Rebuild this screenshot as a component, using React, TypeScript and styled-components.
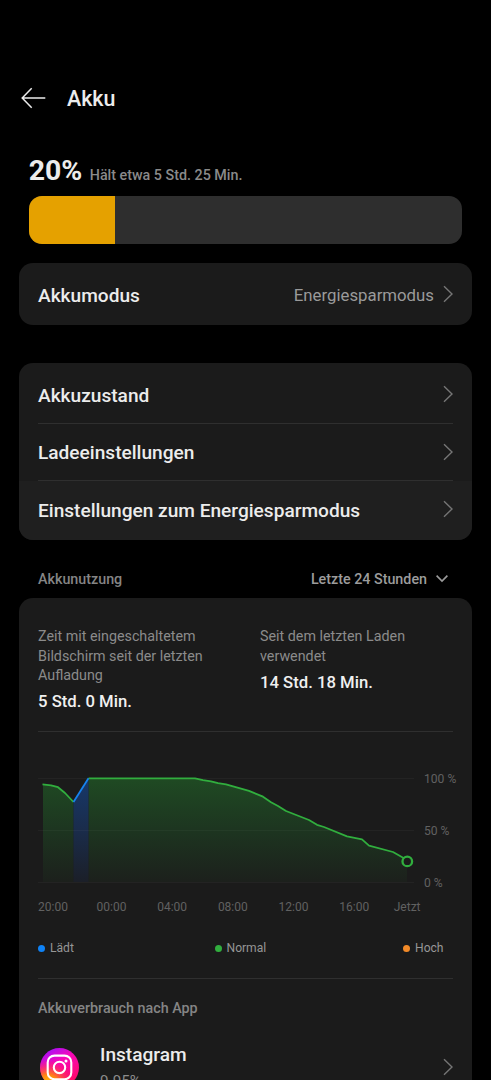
import React from "react";
import styled, { createGlobalStyle } from "styled-components";

const GlobalStyle = createGlobalStyle`
  * { box-sizing: border-box; }
  html, body { margin: 0; padding: 0; background: #000; }
  body { font-family: Roboto, "Liberation Sans", sans-serif; overflow: hidden; }
`;

const Screen = styled.main`
  width: 491px;
  height: 1080px;
  overflow: hidden;
  background: #000;
  display: flex;
  flex-direction: column;
  padding: 78px 19px 0;
`;

const Header = styled.header`
  flex: none;
  display: flex;
  align-items: center;
  height: 40px;
  gap: 21px;
  padding-left: 2px;
`;

const Title = styled.h1`
  margin: 0;
  padding-top: 2px;
  font-size: 21.4px;
  font-weight: 500;
  line-height: 38px;
  color: #ececec;
`;

const Level = styled.section`
  flex: none;
  margin-top: 28px;
  padding: 0 9.7px;
`;

const LevelText = styled.div`
  display: flex;
  align-items: baseline;
  gap: 7.5px;
  height: 50px;
  padding-top: 1px;
  line-height: 48px;
  white-space: nowrap;
`;

const Percent = styled.span`
  font-size: 28.4px;
  font-weight: 700;
  color: #ececec;
`;

const Remaining = styled.span`
  font-size: 14.3px;
  font-weight: 500;
  color: #8a8a8a;
`;

const Track = styled.div`
  height: 48px;
  border-radius: 13px;
  background: #2e2e2e;
  overflow: hidden;
`;

const Fill = styled.div`
  width: 20%;
  height: 100%;
  background: #e5a100;
`;

const Card = styled.section<{ $gap: number }>`
  flex: none;
  margin-top: ${(p) => p.$gap}px;
  border-radius: 14px;
  background: #1b1b1b;
  overflow: hidden;
`;

const Row = styled.div<{ $height: number; $top?: number; $bottom?: number; $active?: boolean }>`
  display: flex;
  align-items: center;
  height: ${(p) => p.$height}px;
  padding: ${(p) => p.$top ?? 0}px 19px ${(p) => p.$bottom ?? 0}px;
  background: ${(p) => (p.$active ? "#1f1f1f" : "transparent")};
`;

const RowLabel = styled.span<{ $drop?: number }>`
  flex: 1;
  padding-top: ${(p) => p.$drop ?? 4}px;
  font-size: 19.1px;
  font-weight: 500;
  line-height: 28px;
  color: #ececec;
  white-space: nowrap;
`;

const RowValue = styled.span`
  margin-right: 9px;
  padding-top: 2px;
  font-size: 16.8px;
  line-height: 28px;
  color: #9a9a9a;
`;

const Divider = styled.hr`
  border: 0;
  height: 1px;
  margin: 0 19px;
  background: #2f2f2f;
`;

const SectionHead = styled.div`
  flex: none;
  display: flex;
  justify-content: space-between;
  align-items: center;
  height: 58px;
  padding: 20px 24px 0 19px;
`;

const Caption = styled.span`
  font-size: 14.3px;
  font-weight: 500;
  line-height: 20px;
  color: #858585;
`;

const Period = styled.span`
  display: flex;
  align-items: center;
  gap: 9px;
  font-size: 14.3px;
  font-weight: 500;
  line-height: 20px;
  color: #9c9c9c;
`;

const Stats = styled.div`
  display: grid;
  grid-template-columns: 222px 1fr;
  height: 133px;
  padding: 29px 19px 0;
`;

const StatLabel = styled.p`
  margin: 0;
  font-size: 14.3px;
  line-height: 19.5px;
  color: #8b8b8b;
  white-space: pre-line;
`;

const StatValue = styled.p<{ $gap: number }>`
  margin: ${(p) => p.$gap}px 0 0;
  font-size: 16.7px;
  font-weight: 500;
  line-height: 26px;
  color: #f0f0f0;
`;

const ChartBlock = styled.div`
  display: grid;
  grid-template-columns: 386px 1fr;
  padding: 38px 0 0 19px;
`;

const Scale = styled.div`
  display: flex;
  flex-direction: column;
  justify-content: space-between;
  height: 120px;
  margin-top: 1px;
  font-size: 12.1px;
  line-height: 16px;
  color: #616161;
`;

const Times = styled.div`
  display: grid;
  grid-template-columns: 58.5px repeat(4, 60.7px) 54.5px auto;
  margin: 8px 0 0 19px;
  font-size: 12px;
  line-height: 16px;
  color: #616161;
`;

const Legend = styled.div`
  display: flex;
  height: 63px;
  padding: 24px 0 0 19px;
`;

const LegendItem = styled.span<{ $color: string; $width?: number }>`
  display: flex;
  align-items: center;
  gap: 5px;
  width: ${(p) => (p.$width ? `${p.$width}px` : "auto")};
  height: 18px;
  font-size: 12.1px;
  color: #969696;

  &::before {
    content: "";
    width: 7px;
    height: 7px;
    border-radius: 50%;
    background: ${(p) => p.$color};
  }
`;

const Apps = styled.div`
  padding: 19px 19px 0;
`;

const AppRow = styled.div`
  display: flex;
  align-items: center;
  height: 76px;
  margin-top: 11px;
  padding-left: 2px;
`;

const AppText = styled.div`
  flex: 1;
  display: flex;
  flex-direction: column;
  padding-left: 21px;
`;

const AppName = styled.span`
  font-size: 19.1px;
  font-weight: 500;
  line-height: 28px;
  color: #ececec;
`;

const AppShare = styled.span`
  font-size: 15.3px;
  line-height: 24px;
  color: #8b8b8b;
`;

const BackArrow = () => (
  <svg width="25" height="22" viewBox="0 0 25 22" fill="none" stroke="#ececec" strokeWidth="1.5">
    <path d="M10.7 1.3 1.2 11l9.5 9.7M1.2 11H24.3" />
  </svg>
);

const Chevron = () => (
  <svg width="10" height="18" viewBox="0 0 10 18" fill="none" stroke="#757575" strokeWidth="1.4">
    <path d="M1 1.2 9 9l-8 7.8" />
  </svg>
);

const DownChevron = () => (
  <svg width="12" height="8" viewBox="0 0 12 8" fill="none" stroke="#9c9c9c" strokeWidth="1.6">
    <path d="M.6 .6 6 6 11.4 .6" />
  </svg>
);

const InstagramIcon = () => (
  <svg width="39" height="39" viewBox="0 0 39 39" fill="none">
    <defs>
      <linearGradient id="igBase" x1="8" y1="0" x2="30" y2="39" gradientUnits="userSpaceOnUse">
        <stop offset="0" stopColor="#a010ff" />
        <stop offset=".38" stopColor="#f808b8" />
        <stop offset="1" stopColor="#ff0a5c" />
      </linearGradient>
      <radialGradient id="igWarm" cx="8" cy="38" r="27" gradientUnits="userSpaceOnUse">
        <stop offset="0" stopColor="#ffd400" />
        <stop offset=".4" stopColor="#ff8a10" />
        <stop offset="1" stopColor="#ff1060" stopOpacity="0" />
      </radialGradient>
    </defs>
    <circle cx="19.5" cy="19.5" r="19.5" fill="url(#igBase)" />
    <circle cx="19.5" cy="19.5" r="19.5" fill="url(#igWarm)" />
    <g stroke="#fff" strokeWidth="2.1">
      <rect x="7.7" y="7.6" width="23.6" height="23.6" rx="6.8" />
      <circle cx="19.5" cy="19.4" r="5.7" />
    </g>
    <circle cx="26" cy="12.9" r="1.5" fill="#fff" />
  </svg>
);

const BatteryChart = () => (
  <svg width="386" height="120" viewBox="0 0 386 120" fill="none">
    <defs>
      <linearGradient id="normalFill" x1="0" y1="8" x2="0" y2="112" gradientUnits="userSpaceOnUse">
        <stop offset="0" stopColor="#1f4a23" />
        <stop offset=".5" stopColor="#1d3520" />
        <stop offset="1" stopColor="#1c201c" />
      </linearGradient>
      <linearGradient id="chargeFill" x1="0" y1="8" x2="0" y2="112" gradientUnits="userSpaceOnUse">
        <stop offset="0" stopColor="#17386a" />
        <stop offset=".5" stopColor="#1a2c4b" />
        <stop offset="1" stopColor="#1b1f28" />
      </linearGradient>
    </defs>
    <path fill="url(#normalFill)" d="M5 14.4 13 15.3 20 17.2 27 23 35.5 32V112H5ZM50.5 8.3H157L165 10.1 173 11.3 180 13.2 188 14.4 211 20.8 225 26.7 233 32.2 240 36 248 41 271 50 279 54.8 286 57 309 66.4 324 69.4 331 75.6 355 82 369 91V112H50.5Z" />
    <path fill="url(#chargeFill)" d="M35.5 32 50.5 8.3V112h-15Z" />
    <path stroke="#fff" strokeOpacity=".035" d="M-1 8.5H376M-1 60.5H376M-1 112.5H376" />
    <g strokeWidth="1.8" strokeLinejoin="round">
      <path stroke="#31ae3e" d="M4.5 14.4 13 15.3 20 17.2 27 23 35.5 32M50.5 8.3H157L165 10.1 173 11.3 180 13.2 188 14.4 211 20.8 225 26.7 233 32.2 240 36 248 41 271 50 279 54.8 286 57 309 66.4 324 69.4 331 75.6 355 82 366 88.3" />
      <path stroke="#1683ef" d="M35.5 32 50.5 8.3" />
    </g>
    <circle cx="369.3" cy="91.4" r="4.8" fill="#1b1b1b" stroke="#31ae3e" strokeWidth="2.3" />
  </svg>
);

const times = ["20:00", "00:00", "04:00", "08:00", "12:00", "16:00", "Jetzt"];

export default function App() {
  return (
    <>
      <GlobalStyle />
      <Screen>
        <Header>
          <BackArrow />
          <Title>Akku</Title>
        </Header>
        <Level>
          <LevelText>
            <Percent>20%</Percent>
            <Remaining>Hält etwa 5 Std. 25 Min.</Remaining>
          </LevelText>
          <Track>
            <Fill />
          </Track>
        </Level>
        <Card $gap={19}>
          <Row $height={62}>
            <RowLabel>Akkumodus</RowLabel>
            <RowValue>Energiesparmodus</RowValue>
            <Chevron />
          </Row>
        </Card>
        <Card $gap={38}>
          <Row $height={60} $top={2}>
            <RowLabel>Akkuzustand</RowLabel>
            <Chevron />
          </Row>
          <Divider />
          <Row $height={56}>
            <RowLabel $drop={2}>Ladeeinstellungen</RowLabel>
            <Chevron />
          </Row>
          <Divider />
          <Row $height={59} $bottom={3} $active>
            <RowLabel>Einstellungen zum Energiesparmodus</RowLabel>
            <Chevron />
          </Row>
        </Card>
        <SectionHead>
          <Caption>Akkunutzung</Caption>
          <Period>
            Letzte 24 Stunden
            <DownChevron />
          </Period>
        </SectionHead>
        <Card $gap={0}>
          <Stats>
            <div>
              <StatLabel>{"Zeit mit eingeschaltetem\nBildschirm seit der letzten\nAufladung"}</StatLabel>
              <StatValue $gap={3}>5 Std. 0 Min.</StatValue>
            </div>
            <div>
              <StatLabel>{"Seit dem letzten Laden\nverwendet"}</StatLabel>
              <StatValue $gap={4}>14 Std. 18 Min.</StatValue>
            </div>
          </Stats>
          <Divider />
          <ChartBlock>
            <BatteryChart />
            <Scale>
              <span>100 %</span>
              <span>50 %</span>
              <span>0 %</span>
            </Scale>
          </ChartBlock>
          <Times>
            {times.map((t) => (
              <span key={t}>{t}</span>
            ))}
          </Times>
          <Legend>
            <LegendItem $color="#0f82f5" $width={176.5}>Lädt</LegendItem>
            <LegendItem $color="#31ae3e" $width={188.5}>Normal</LegendItem>
            <LegendItem $color="#f28a28">Hoch</LegendItem>
          </Legend>
          <Divider />
          <Apps>
            <Caption>Akkuverbrauch nach App</Caption>
            <AppRow>
              <InstagramIcon />
              <AppText>
                <AppName>Instagram</AppName>
                <AppShare>9.95%</AppShare>
              </AppText>
              <Chevron />
            </AppRow>
          </Apps>
        </Card>
      </Screen>
    </>
  );
}
